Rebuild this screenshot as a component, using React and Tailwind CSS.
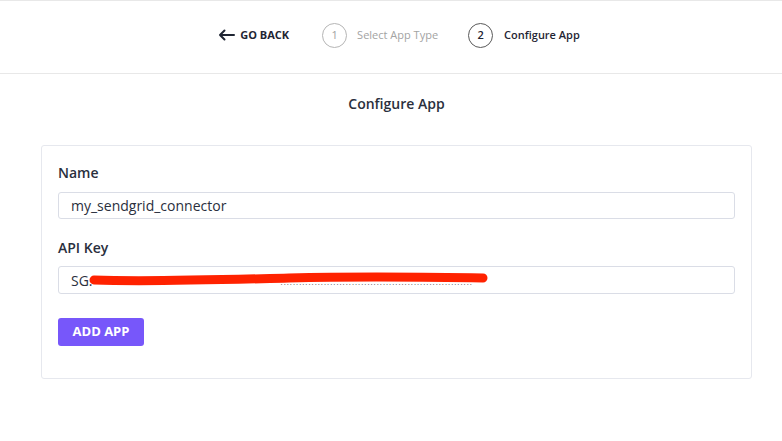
import React from "react";

export default function App() {
  return (
    <div className="w-[782px] h-[441px] bg-white overflow-hidden" style={{ fontFamily: '"Open Sans", "Liberation Sans", sans-serif' }}>
      <header className="h-[74px] border-t border-b border-[#e8e8e8] flex items-center justify-center pl-[16px] pb-[4px]">
        <div className="flex items-center">
          <div className="flex items-center gap-[5px] text-[11px] font-bold text-[#1f2533]">
            <svg width="17" height="12" viewBox="0 0 17 12" fill="none" stroke="#1f2533" strokeWidth="2" strokeLinecap="round" strokeLinejoin="round">
              <path d="M16 6H2M6.5 1.5L2 6l4.5 4.5" />
            </svg>
            <span>GO BACK</span>
          </div>
          <div className="flex items-center ml-[33px]">
            <div className="w-[25px] h-[25px] rounded-full border border-[#b5b5b5] flex items-center justify-center text-[11px] text-[#a0a0a0]">1</div>
            <span className="ml-[10px] text-[11px] text-[#a3a3a3]">Select App Type</span>
          </div>
          <div className="flex items-center ml-[30px]">
            <div className="w-[25px] h-[25px] rounded-full border border-[#5a5a5a] flex items-center justify-center text-[11px] font-semibold text-[#1f2533]">2</div>
            <span className="ml-[11px] text-[11px] font-semibold text-[#1f2533]">Configure App</span>
          </div>
        </div>
      </header>
      <div className="ml-[41px] w-[711px]">
        <h1 className="text-center text-[14px] font-semibold text-[#2a2f3d] mt-[20px] leading-[20px]">Configure App</h1>
        <div className="mt-[31px] border border-[#e6e8ee] rounded-[3px] px-[16px] pt-[17px] pb-[32px]">
          <label className="block text-[14px] font-semibold text-[#2a2f3d] leading-[20px]">Name</label>
          <div className="mt-[9px] h-[27px] border border-[#dadde6] rounded-[3px] flex items-center px-[12px] text-[14px] text-[#2a2f3d]">
            my_sendgrid_connector
          </div>
          <label className="block mt-[19px] text-[14px] font-semibold text-[#2a2f3d] leading-[20px]">API Key</label>
          <div className="relative mt-[8px] h-[28px] border border-[#dadde6] rounded-[3px] flex items-center px-[12px] text-[14px] text-[#2a2f3d]">
            <span>SG.</span>
            <span className="ml-[188px] mt-[4px] text-[8px] tracking-[1px] text-[#555]">..............................................................</span>
            <svg className="absolute left-[30px] top-[4px]" width="400" height="16" viewBox="0 0 400 16" fill="none">
              <path d="M5 9 C 60 11, 120 9, 200 7 S 330 6, 394 7" stroke="#ff2200" strokeWidth="9" strokeLinecap="round" />
            </svg>
          </div>
          <button className="mt-[24px] h-[28px] w-[86px] rounded-[3px] bg-[#7757fa] text-white text-[13px] font-bold flex items-center justify-center">
            ADD APP
          </button>
        </div>
      </div>
    </div>
  );
}
